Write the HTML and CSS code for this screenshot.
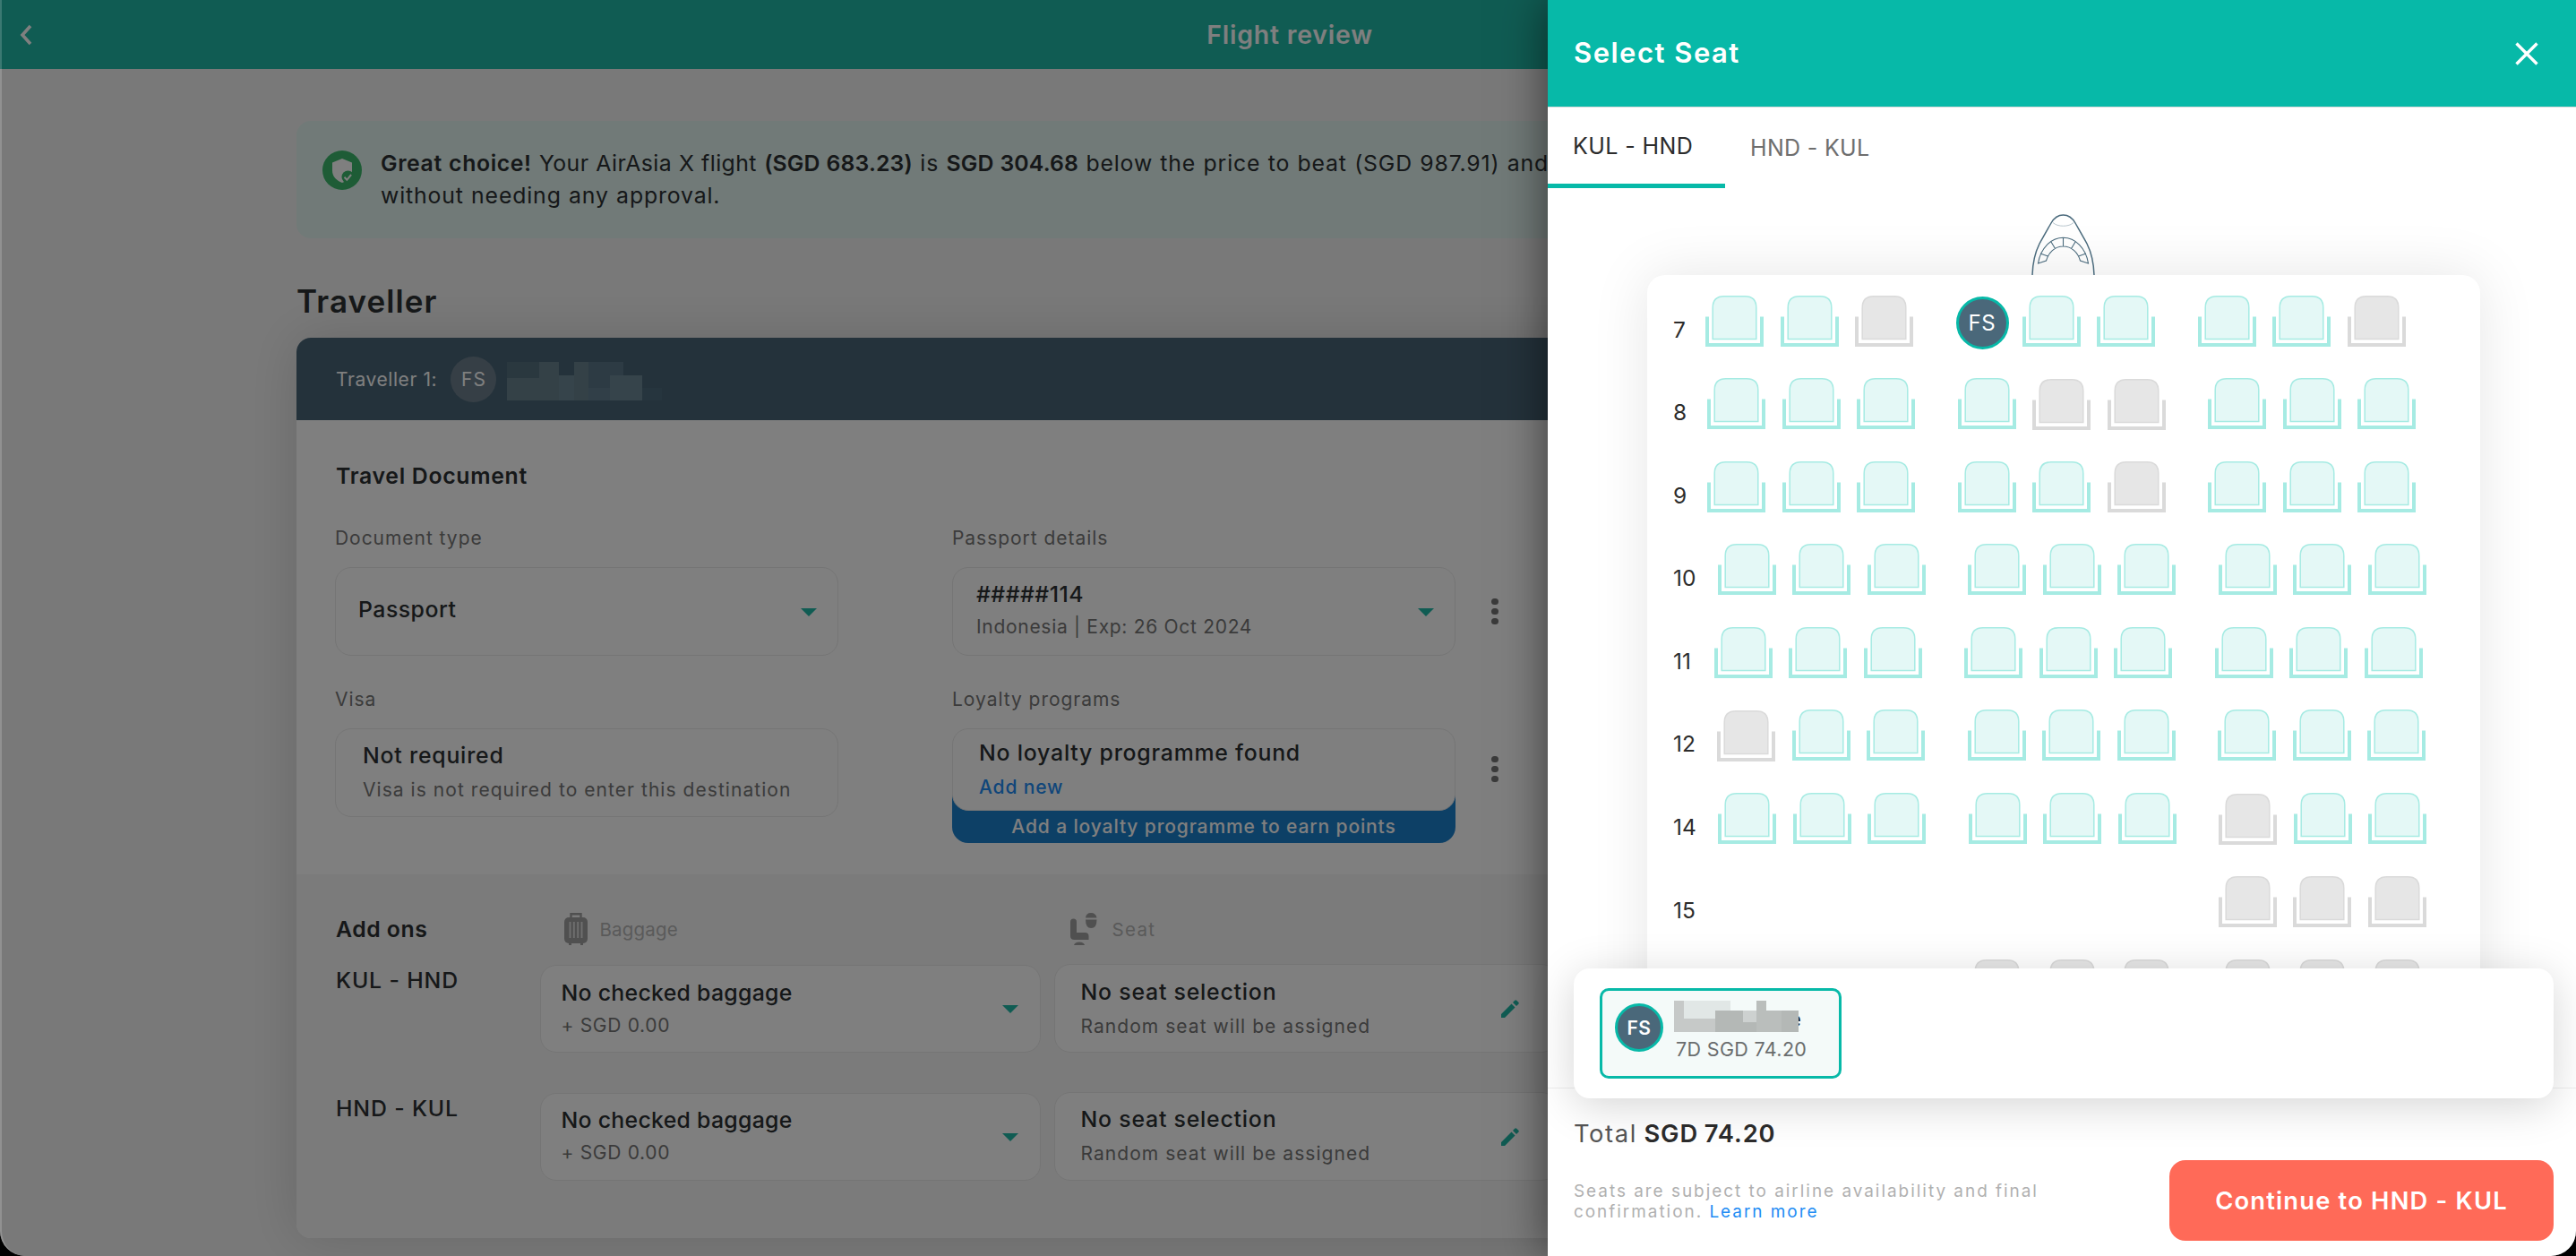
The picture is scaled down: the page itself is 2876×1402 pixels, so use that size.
FILE: index.html
```html
<!DOCTYPE html>
<html lang="en">
<head>
<meta charset="utf-8">
<title>Flight review</title>
<link rel="stylesheet" href="styles.css">
</head>
<body>
<div class="window">
  <div class="page">
    <header class="topbar">
      <svg class="back" viewBox="0 0 14 24"><path d="M12 2 3 12l9 10" fill="none" stroke="#fff" stroke-width="3.6"/></svg>
      <h1 class="topbar-title">Flight review</h1>
    </header>

    <main class="content">
      <section class="banner">
        <svg class="banner-icon" viewBox="0 0 44 44">
          <circle cx="22" cy="22" r="22" fill="#3cb96c"/>
          <path d="M22 9l11 4.500v9c0 6.500-4.500 11-11 13.500-6.500-2.500-11-7-11-13.500v-9z" fill="#fff"/>
          <circle cx="28.500" cy="29.500" r="7" fill="#3cb96c"/>
          <path d="M24.500 29.800l2.800 3 4.800-5.800" fill="none" stroke="#fff" stroke-width="2"/>
        </svg>
        <p class="banner-text"><b class="lead">Great choice!</b> <span class="snug">Your AirAsia X flight</span> <b>(SGD 683.23)</b> is <b>SGD 304.68</b> below the price to beat (SGD 987.91) and<br>without needing any approval.</p>
      </section>

      <h2 class="section-title">Traveller</h2>

      <section class="card">
        <div class="card-head">
          <span class="card-head-label">Traveller 1:</span>
          <span class="avatar avatar-head">FS</span>
          <svg class="redacted-head" viewBox="0 0 173 43">
            <path fill="#54707f" d="M0 0h36v18H0z"/>
            <path fill="#68828f" d="M36 0h22v18H36zM0 18h58v25H0zM75 0h16v43H75z"/>
            <path fill="#6c8896" d="M58 15h17v28H58zM115 15h36v28h-36z"/>
            <path fill="#5a7688" d="M91 0h39v15H91zM91 15h24v14H91z"/>
            <path fill="#627e90" d="M91 29h24v14H91z"/>
            <path fill="#4c6a7c" d="M151 29h22v14h-22z"/>
          </svg>
        </div>

        <div class="documents">
          <h3 class="group-title">Travel Document</h3>
          <div class="fields">
            <div class="field">
              <span class="label">Document type</span>
              <div class="box box-single"><span class="value passport">Passport</span><i class="caret"></i></div>
            </div>
            <div class="field">
              <span class="label">Passport details</span>
              <div class="with-menu">
                <div class="box box-number"><span class="value">#####114</span><span class="sub">Indonesia | Exp: 26 Oct 2024</span><i class="caret"></i></div>
                <span class="dots"><i></i><i></i><i></i></span>
              </div>
            </div>
            <div class="field">
              <span class="label">Visa</span>
              <div class="box box-note"><span class="value wide">Not required</span><span class="sub loose">Visa is not required to enter this destination</span></div>
            </div>
            <div class="field">
              <span class="label">Loyalty programs</span>
              <div class="with-menu">
                <div class="loyalty">
                  <div class="box box-note box-loyalty"><span class="value wide">No loyalty programme found</span><a class="sub link">Add new</a></div>
                  <div class="strip">Add a loyalty programme to earn points</div>
                </div>
                <span class="dots dots-loyalty"><i></i><i></i><i></i></span>
              </div>
            </div>
          </div>
        </div>

        <div class="addons">
          <div class="addons-head">
            <h3 class="group-title">Add ons</h3>
            <span class="addon-kind">
              <svg class="bag-icon" viewBox="0 0 26 36"><path d="M7.500 6V1.200h11V6" fill="none" stroke="#a0a0a0" stroke-width="2.400"/><rect x="0" y="5" width="26" height="29" rx="5" fill="#a0a0a0"/><path d="M5 34h3v2H5zM18 34h3v2h-3z" fill="#a0a0a0"/><path d="M6.500 10v18M10.800 10v18M15.200 10v18M19.500 10v18" stroke="#dedede" stroke-width="1.900"/></svg>
              <span>Baggage</span>
            </span>
            <span class="addon-kind addon-seat">
              <svg class="seat-icon" viewBox="0 0 30 36"><path d="M0 10q0-3.500 3.500-3.500T7 10v12h9.500q4 0 4 4v4h-16Q0 30 0 26z" fill="#a0a0a0"/><path d="M4 36q1-3.500 6-3.500t6 3.500z" fill="#a0a0a0"/><path d="M17 5.500Q17.500 0 23 0t6.500 5.500zM17 7.500h12.500q0 9.500-6.250 9.500T17 7.500z" fill="#a0a0a0"/></svg>
              <span class="seat-word">Seat</span>
            </span>
          </div>
          <div class="addon-row">
            <span class="route">KUL - HND</span>
            <div class="box box-bag"><span class="value snugger">No checked baggage</span><span class="sub">+ SGD 0.00</span><i class="caret"></i></div>
            <div class="box box-seat"><span class="value wide">No seat selection</span><span class="sub loose">Random seat will be assigned</span><svg class="pencil" viewBox="0 0 20 20"><path d="M0 16 11.500 4.500l4 4L4 20H0zM13 3l2.200-2.300q1-1 2 0l2.100 2.100q1 1 0 2L17 7z" fill="#20b8a6"/></svg></div>
          </div>
          <div class="addon-row">
            <span class="route">HND - KUL</span>
            <div class="box box-bag"><span class="value snugger">No checked baggage</span><span class="sub">+ SGD 0.00</span><i class="caret"></i></div>
            <div class="box box-seat"><span class="value wide">No seat selection</span><span class="sub loose">Random seat will be assigned</span><svg class="pencil" viewBox="0 0 20 20"><path d="M0 16 11.500 4.500l4 4L4 20H0zM13 3l2.200-2.300q1-1 2 0l2.100 2.100q1 1 0 2L17 7z" fill="#20b8a6"/></svg></div>
          </div>
        </div>
      </section>
    </main>
  </div>

  <div class="backdrop"></div>

  <aside class="drawer">
    <header class="drawer-head">
      <h2 class="drawer-title">Select Seat</h2>
      <svg class="close" viewBox="0 0 26 26"><path d="M1.500 1.500l23 23M24.500 1.500l-23 23" stroke="#fff" stroke-width="3.400"/></svg>
    </header>
    <nav class="tabs">
      <a class="tab tab-active">KUL - HND</a>
      <a class="tab">HND - KUL</a>
    </nav>

    <div class="cabin">
      <svg class="nose" viewBox="0 0 71 68" fill="none" stroke="#4a6a7c">
        <path d="M1 68C1.500 52 4 43 9 33c5-9 9-16 13-23C26 3 30 1 35.500 1S45 3 49 10c4 7 8 14 13 23 5 10 7.500 19 8 35" stroke-width="1.500"/>
        <path d="M24 9.500C29 14.500 42 14.500 47 9.500" stroke="#b9c6ce" stroke-width="1"/>
        <path d="M7.500 55C10 38 22 26.300 35.500 26.300S61 38 63.500 55L54.500 52C52 43 45 36 35.500 36S19 43 16.500 52zM35.500 26v10M22 31l4.500 7.500M49 31l-4.500 7.500M10 44l8.500 3M61 44l-8.500 3" stroke-width="1.100"/>
      </svg>
      <div class="seatmap" id="seatmap"></div>
    </div>

    <div class="passengers">
      <div class="passenger">
        <span class="avatar avatar-passenger">FS</span>
        <div class="passenger-info">
          <svg class="redacted-name" viewBox="0 0 143 35">
            <text x="128" y="29" class="redacted-tail">e</text>
            <path fill="#e1e7e6" d="M11 0h52v20H11z"/>
            <path fill="#c6c9c8" d="M0 0h11v20h35v15H0z"/>
            <path fill="#b4b8b6" d="M46 11h31v24H46zM77 24h15v11H77zM120 11h19v24h-19z"/>
            <path fill="#cdd1d0" d="M77 11h15v13H77z"/>
            <path fill="#babebc" d="M92 0h11v11h17v24H92z"/>
          </svg>
          <span class="passenger-seat">7D SGD 74.20</span>
        </div>
      </div>
    </div>

    <footer class="drawer-foot">
      <p class="total"><span>Total</span> <b>SGD 74.20</b></p>
      <div class="foot-row">
        <p class="terms">Seats are subject to airline availability and final confirmation. <a>Learn more</a></p>
        <button class="continue">Continue to HND - KUL</button>
      </div>
    </footer>
  </aside>
  <div class="window-edge"></div>
</div>
<script src="seats.js"></script>
</body>
</html>
```
FILE: styles.css
```css
* { box-sizing: border-box; }
body { margin: 0; background: #000; font-family: Inter, "Liberation Sans", sans-serif; color: #2c3033; }
h1, h2, h3, p { margin: 0; font-weight: 600; }
b { font-weight: 600; }

.window { position: relative; width: 2876px; height: 1402px; overflow: hidden; border-radius: 0 0 28px 28px; }
.page { height: 1402px; background: #f3f3f3; overflow: hidden; isolation: isolate; }
.backdrop { position: absolute; inset: 0; background: rgba(0, 0, 0, .5); }
.window-edge { position: absolute; inset: 0 1148px 0 0; border: solid rgba(255, 255, 255, .18); border-width: 0 0 0 2px; border-radius: 0 0 0 28px; }

.topbar { height: 77px; padding: 0 22px; display: flex; align-items: center; background: #20b8a6; color: #fff; }
.back { width: 14px; height: 24px; }
.topbar-title { flex: 1; padding-right: 10px; text-align: center; font-size: 28.4px; letter-spacing: .82px; }

.content { width: 2214px; margin: 58px auto 0; }
.banner { display: flex; gap: 21px; height: 131px; padding: 29px; border-radius: 16px; background: #e2f4f0; }
.banner-icon { flex: none; width: 44px; height: 44px; margin-top: 4px; }
.banner-text { font-size: 24.8px; font-weight: 400; line-height: 36px; letter-spacing: .86px; word-spacing: .5px; white-space: nowrap; }
.banner-text b { letter-spacing: .15px; }
.banner-text .lead { letter-spacing: .6px; }
.banner-text .snug { letter-spacing: .42px; }

.section-title { margin: 48px 0 19px; font-size: 35px; line-height: 44px; letter-spacing: 1.1px; }
.card { border-radius: 16px; background: #fff; box-shadow: 0 0 60px rgba(0, 0, 0, .14); overflow: clip; }
.card-head { display: flex; align-items: center; height: 92px; padding: 0 44px; background: #486476; color: #fff; font-size: 21px; }
.card-head-label { width: 128px; letter-spacing: .58px; }
.avatar { display: flex; align-items: center; justify-content: center; border-radius: 50%; }
.avatar-head { width: 51px; height: 51px; margin-right: 12px; background: #6c7f8c; letter-spacing: 1px; padding-left: 1px; }
.redacted-head { width: 173px; height: 43px; margin-top: 4px; }

.documents { padding: 44px 43px 35px; }
.group-title { padding-left: 1px; font-size: 24.8px; line-height: 36px; letter-spacing: .7px; }
.fields { display: grid; grid-template-columns: 562px 700px; column-gap: 127px; row-gap: 33px; margin-top: 36px; }
.field { display: flex; flex-direction: column; }
.label { margin-bottom: 16px; font-size: 21px; line-height: 32px; letter-spacing: .96px; color: #767676; }
.box { position: relative; display: flex; flex-direction: column; height: 99px; background: #fff; border: 1px solid #eaeaea; border-radius: 18px; }
.value { font-size: 24.8px; line-height: 36px; font-weight: 500; letter-spacing: .5px; }
.value.wide { letter-spacing: .8px; }
.value.snugger { letter-spacing: .3px; }
.sub { font-size: 21px; line-height: 32px; letter-spacing: .7px; color: #767676; }
.sub.loose { letter-spacing: 1.05px; }
.sub.link { color: #218cf4; font-weight: 500; letter-spacing: .85px; }
.box-single { padding: 28px 25px 0; }
.box-number { width: 562px; padding: 11px 26px 0; gap: 3px; }
.box-note { padding: 11px 30px 0; gap: 5px; }
.box-loyalty { z-index: 1; height: 92px; padding: 8px 29px 0; }
.caret { position: absolute; right: 23.5px; top: 46%; border: solid transparent; border-width: 9px 9px 0; border-top-color: #20b8a6; }
.with-menu { display: flex; align-items: center; gap: 40px; }
.loyalty { width: 562px; height: 128px; }
.strip { height: 66px; margin-top: -30px; padding-top: 32px; border-radius: 0 0 18px 18px; background: #1a80cc; color: #fff; font-size: 21px; font-weight: 500; line-height: 32px; letter-spacing: .88px; text-align: center; }
.dots { display: flex; flex-direction: column; gap: 3.5px; }
.dots i { width: 7.500px; height: 7.500px; border-radius: 50%; background: #767676; }
.dots-loyalty { margin-bottom: 37px; }

.addons { height: 406px; padding: 43px 43px 0; background: #f7f7f7; }
.addons-head { display: grid; grid-template-columns: 228.5px 574px 562px; height: 36px; margin-bottom: 21px; }
.addons-head .group-title { letter-spacing: .5px; }
.addon-kind { display: flex; align-items: center; gap: 14px; padding-left: 27px; font-size: 20.5px; letter-spacing: .2px; color: #b4b4b4; }
.addon-seat { padding-left: 18px; gap: 17px; }
.bag-icon { width: 26px; height: 36px; }
.seat-icon { width: 30px; height: 36px; }
.seat-word { letter-spacing: 1.3px; }
.addon-row { display: grid; grid-template-columns: 228.5px 559px 562px; height: 99px; margin-bottom: 43.500px; }
.route { padding-left: 1px; font-size: 24.8px; font-weight: 500; line-height: 36px; letter-spacing: .85px; }
.box-bag { margin-top: 1px; height: 98px; padding: 11.500px 23px 0; gap: 3px; }
.box-seat { margin-left: 15px; width: 562px; padding: 11.500px 29px 0; gap: 5px; }
.pencil { position: absolute; right: 42px; top: 39px; width: 20px; height: 20px; }

.drawer { position: absolute; top: 0; right: 0; width: 1148px; height: 1402px; display: flex; flex-direction: column; background: #fff; box-shadow: 0 0 50px rgba(0, 0, 0, .55); }
.drawer-head { display: flex; align-items: center; justify-content: space-between; height: 120px; padding: 0 42px 0 29px; background: #07b9a8; border-bottom: 1px solid #dcdcdc; color: #fff; }
.drawer-title { padding-bottom: 2px; font-size: 31px; letter-spacing: 1.5px; }
.close { width: 26px; height: 26px; }
.tabs { display: flex; height: 90px; }
.tab { display: flex; align-items: center; padding-left: 28px; font-size: 25px; letter-spacing: .33px; color: #6e6e6e; }
.tab-active { width: 198px; border-bottom: 5px solid #07b9a8; color: #2c2c2c; letter-spacing: .4px; }

.cabin { flex: 1; min-height: 0; overflow: hidden; padding: 29px 107px 0 111px; display: flex; flex-direction: column; align-items: center; }
.nose { position: relative; z-index: 1; flex: none; width: 71px; height: 68px; margin-right: 1px; }
.seatmap { flex: none; width: 930px; height: 1100px; padding: 22.500px 28px 0; border-radius: 20px; background: #fff; box-shadow: 0 0 64px rgba(0, 0, 0, .1); }
.row { display: flex; height: 92.6px; }
.row-number { flex: none; padding: 23px 0 0 1px; font-size: 24.5px; line-height: 30px; color: #2c2c2c; }
.group { display: flex; gap: 18.5px; margin-right: 47.5px; }
.seat { width: 65px; height: 58px; }
.seat .cushion { fill: #e4f8f6; stroke: #a6ebe3; stroke-width: 1.5; }
.seat .frame { fill: none; stroke: #a6ebe3; stroke-width: 4; }
.seat.taken { margin-top: .5px; }
.seat.taken .cushion { fill: #e6e6e6; stroke: #dadada; }
.seat.taken .frame { stroke: #dadada; }
.seat.none { visibility: hidden; }
.avatar-seat { width: 59px; height: 59px; margin: 1px -3.5px 0 0; border: 3px solid #07b9a8; background: #4a687a; color: #fff; font-size: 24px; letter-spacing: .8px; }

.passengers { position: absolute; left: 29px; right: 25px; bottom: 176px; height: 145px; padding: 22px 29px; border-radius: 18px; background: #fff; box-shadow: 0 8px 48px rgba(0, 0, 0, .17); }
.passenger { display: flex; gap: 12px; width: 270px; height: 101px; padding: 11px 14px; border: 3px solid #07b9a8; border-radius: 10px; background: #f4faf9; }
.avatar-passenger { flex: none; width: 54px; height: 54px; margin-top: 3px; border: 3px solid #07b9a8; background: #4a687a; color: #fff; font-size: 21px; font-weight: 600; letter-spacing: .6px; }
.passenger-info { display: flex; flex-direction: column; }
.redacted-name { width: 143px; height: 35px; }
.redacted-tail { font-size: 24px; fill: #222; }
.passenger-seat { margin-top: 5px; padding-left: 2px; font-size: 21.5px; line-height: 28px; letter-spacing: .35px; color: #6a6d6e; white-space: nowrap; }

.drawer-foot { height: 188px; padding: 35px 25px 0 29px; border-top: 1px solid #efefef; }
.total { font-size: 27.3px; font-weight: 400; line-height: 32px; letter-spacing: .9px; word-spacing: -1px; color: #555; }
.total span { letter-spacing: 1.6px; }
.total b { color: #2c2c2c; }
.foot-row { display: flex; justify-content: space-between; align-items: flex-start; margin-top: 13px; }
.terms { width: 560px; padding-top: 23px; font-size: 18.9px; font-weight: 400; line-height: 23.3px; letter-spacing: 2px; color: #b0b0b0; }
.terms a { color: #218cf4; }
.continue { width: 429px; height: 90px; border: 0; border-radius: 18px; background: #ff6a58; color: #fff; font: 600 27.3px Inter, sans-serif; letter-spacing: 1.2px; }
```
FILE: seats.js
```js
// Each group is a string: a = available, t = taken, s = selected, "-" = no seat.
const rows = [
  { n: 7, w: 37, groups: ["aat", "saa", "aat"] },
  { n: 8, w: 39, groups: ["aaa", "att", "aaa"] },
  { n: 9, w: 39, groups: ["aaa", "aat", "aaa"] },
  { n: 10, w: 50.5, groups: ["aaa", "aaa", "aaa"] },
  { n: 11, w: 46.5, groups: ["aaa", "aaa", "aaa"] },
  { n: 12, w: 50, groups: ["taa", "aaa", "aaa"] },
  { n: 14, w: 51, groups: ["aaa", "aaa", "taa"] },
  { n: 15, w: 50.5, groups: ["---", "---", "ttt"] },
  { n: 16, w: 50.5, groups: ["---", "ttt", "ttt"] }
];

const kinds = { a: "", t: " taken", "-": " none" };

function seat(code) {
  if (code === "s") return '<span class="avatar avatar-seat">FS</span>';
  return `<svg class="seat${kinds[code]}" viewBox="0 0 65 58">
    <path class="cushion" d="M8.200 48.500V13.500Q8.200 .8 20.900 .8h23.200Q56.800 .8 56.800 13.500v35z"/>
    <path class="frame" d="M2 23.500v31.500h61v-31.500"/>
  </svg>`;
}

document.getElementById("seatmap").innerHTML = rows.map(row => `
  <div class="row">
    <span class="row-number" style="width:${row.w}px">${row.n}</span>
    ${row.groups.map(g => `<div class="group">${[...g].map(seat).join("")}</div>`).join("")}
  </div>`).join("");
```
